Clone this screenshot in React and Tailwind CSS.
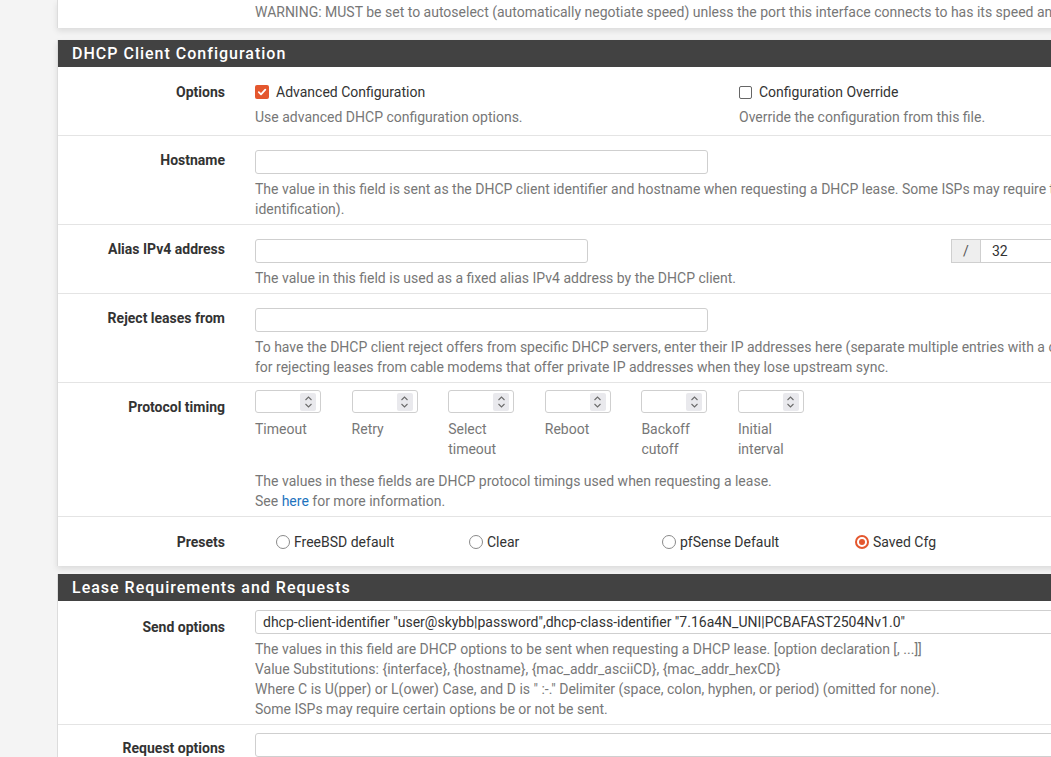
import React from "react";

function Label({ children, className }) {
  return (
    <div className={"w-[197px] shrink-0 pr-[30px] text-right font-bold text-[#333] " + className}>
      {children}
    </div>
  );
}

function Help({ children, className = "" }) {
  return <div className={"text-[#777] " + className}>{children}</div>;
}

function TextInput({ className = "", value = "" }) {
  return (
    <div className={"h-[24px] rounded-[3px] border border-[#cfcfcf] bg-white px-[7px] leading-[22px] text-[#333] whitespace-nowrap overflow-hidden " + className}>
      {value}
    </div>
  );
}

function Check({ checked }) {
  if (checked) {
    return (
      <span className="inline-flex h-[14px] w-[14px] items-center justify-center rounded-[2px] bg-[#e4572e]">
        <svg width="10" height="10" viewBox="0 0 10 10">
          <path d="M1.8 5.2 L4 7.3 L8.3 2.6" fill="none" stroke="#fff" strokeWidth="1.8" strokeLinecap="round" strokeLinejoin="round" />
        </svg>
      </span>
    );
  }
  return <span className="inline-block h-[13px] w-[13px] rounded-[2px] border-[1.5px] border-[#666] bg-white" />;
}

function Radio({ checked }) {
  if (checked) {
    return (
      <span className="inline-flex h-[14px] w-[14px] items-center justify-center rounded-full border-[2px] border-[#e4572e] bg-white">
        <span className="h-[6px] w-[6px] rounded-full bg-[#e4572e]" />
      </span>
    );
  }
  return <span className="inline-block h-[14px] w-[14px] rounded-full border-[1.5px] border-[#8a8a8a] bg-white" />;
}

function Spinner() {
  return (
    <div className="flex h-[23px] w-[66px] items-center justify-end rounded-[3px] border border-[#cfcfcf] bg-white pr-[4px]">
      <div className="flex h-[18px] w-[16px] flex-col items-center justify-center rounded-[2px] bg-[#e9e9ed]">
        <svg width="9" height="14" viewBox="0 0 9 14">
          <path d="M1.5 5 L4.5 2 L7.5 5" fill="none" stroke="#6b6b6b" strokeWidth="1.1" />
          <path d="M1.5 9 L4.5 12 L7.5 9" fill="none" stroke="#6b6b6b" strokeWidth="1.1" />
        </svg>
      </div>
    </div>
  );
}

function Header({ children }) {
  return (
    <div className="h-[27px] bg-[#424242] pl-[14px] text-[16px] font-medium leading-[27px] tracking-[1px] text-white">
      {children}
    </div>
  );
}

export default function App() {
  const timings = [
    "Timeout",
    "Retry",
    "Select timeout",
    "Reboot",
    "Backoff cutoff",
    "Initial interval",
  ];
  const presets = [
    ["FreeBSD default", false],
    ["Clear", false],
    ["pfSense Default", false],
    ["Saved Cfg", true],
  ];
  return (
    <div className="h-[757px] w-[1051px] overflow-hidden bg-[#f4f4f4] font-[Roboto,sans-serif] text-[14px] leading-[20px] text-[#333]">
      <div className="ml-[57px] flex w-[1200px] flex-col">
        {/* previous panel tail */}
        <div className="h-[28px] border-l border-[#dcdcdc] bg-white pl-[197px] pt-[2px] shadow-[0_3px_6px_rgba(0,0,0,0.10)]">
          <div className="whitespace-nowrap text-[#777]">
            WARNING: MUST be set to autoselect (automatically negotiate speed) unless the port this interface connects to has its speed and duplex forced.
          </div>
        </div>

        {/* DHCP Client Configuration */}
        <div className="mt-[12px] flex flex-col border-l border-[#dcdcdc] bg-white shadow-[0_3px_6px_rgba(0,0,0,0.10)]">
          <Header>DHCP Client Configuration</Header>

          {/* Options */}
          <div className="flex">
            <Label className="pt-[15px]">Options</Label>
            <div className="flex pt-[15px] pb-[8px]">
              <div className="w-[484px]">
                <div className="flex h-[20px] items-center">
                  <Check checked />
                  <span className="ml-[7px]">Advanced Configuration</span>
                </div>
                <Help className="mt-[5px]">Use advanced DHCP configuration options.</Help>
              </div>
              <div className="w-[400px]">
                <div className="flex h-[20px] items-center">
                  <Check checked={false} />
                  <span className="ml-[7px]">Configuration Override</span>
                </div>
                <Help className="mt-[5px]">Override the configuration from this file.</Help>
              </div>
            </div>
          </div>

          {/* Hostname */}
          <div className="flex border-t border-[#e4e4e4]">
            <Label className="pt-[14px]">Hostname</Label>
            <div className="w-[955px] pt-[14px] pb-[5px]">
              <TextInput className="w-[453px]" />
              <Help className="mt-[5px]">
                The value in this field is sent as the DHCP client identifier and hostname when requesting a DHCP lease. Some ISPs may require this (for client identification).
              </Help>
            </div>
          </div>

          {/* Alias IPv4 */}
          <div className="flex border-t border-[#e4e4e4]">
            <Label className="pt-[14px]">Alias IPv4 address</Label>
            <div className="w-[955px] pt-[14px] pb-[5px]">
              <div className="flex">
                <TextInput className="w-[333px]" />
                <div className="ml-[363px] flex">
                  <div className="h-[24px] w-[30px] border border-[#cfcfcf] bg-[#eeeeee] text-center leading-[22px] text-[#555]">/</div>
                  <div className="h-[24px] w-[160px] border border-l-0 border-[#cfcfcf] bg-white pl-[11px] leading-[22px] text-[#333]">32</div>
                </div>
              </div>
              <Help className="mt-[5px]">The value in this field is used as a fixed alias IPv4 address by the DHCP client.</Help>
            </div>
          </div>

          {/* Reject leases */}
          <div className="flex border-t border-[#e4e4e4]">
            <Label className="pt-[14px]">Reject leases from</Label>
            <div className="w-[955px] pt-[14px] pb-[5px]">
              <TextInput className="w-[453px]" />
              <Help className="mt-[5px]">
                To have the DHCP client reject offers from specific DHCP servers, enter their IP addresses here (separate multiple entries with a comma). This is useful for rejecting leases from cable modems that offer private IP addresses when they lose upstream sync.
              </Help>
            </div>
          </div>

          {/* Protocol timing */}
          <div className="flex border-t border-[#e4e4e4]">
            <Label className="pt-[14px]">Protocol timing</Label>
            <div className="w-[955px] pt-[7px] pb-[5px]">
              <div className="flex">
                {timings.map((t) => (
                  <div key={t} className="w-[96.6px] shrink-0">
                    <Spinner />
                    <div className="mt-[6px] w-[70px] text-[#777]">{t}</div>
                  </div>
                ))}
              </div>
              <Help className="mt-[12px]">
                The values in these fields are DHCP protocol timings used when requesting a lease.
                <br />
                See <span className="text-[#1e73be]">here</span> for more information.
              </Help>
            </div>
          </div>

          {/* Presets */}
          <div className="flex border-t border-[#e4e4e4]">
            <Label className="pt-[15px]">Presets</Label>
            <div className="flex pt-[15px] pb-[14px]">
              {presets.map(([t, c]) => (
                <div key={t} className="flex h-[20px] w-[193px] items-center pl-[21px]">
                  <Radio checked={c} />
                  <span className="ml-[4px]">{t}</span>
                </div>
              ))}
            </div>
          </div>
        </div>

        {/* Lease Requirements and Requests */}
        <div className="mt-[8px] flex flex-col border-l border-[#dcdcdc] bg-white">
          <Header>Lease Requirements and Requests</Header>

          <div className="flex">
            <Label className="pt-[16px]">Send options</Label>
            <div className="w-[955px] pt-[9px] pb-[5px]">
              <TextInput
                className="w-full"
                value={'dhcp-client-identifier "user@skybb|password",dhcp-class-identifier "7.16a4N_UNI|PCBAFAST2504Nv1.0"'}
              />
              <Help className="mt-[5px]">
                The values in this field are DHCP options to be sent when requesting a DHCP lease. [option declaration [, ...]]
                <br />
                Value Substitutions: {"{interface}"}, {"{hostname}"}, {"{mac_addr_asciiCD}"}, {"{mac_addr_hexCD}"}
                <br />
                Where C is U(pper) or L(ower) Case, and D is " :-." Delimiter (space, colon, hyphen, or period) (omitted for none).
                <br />
                Some ISPs may require certain options be or not be sent.
              </Help>
            </div>
          </div>

          <div className="flex border-t border-[#e4e4e4]">
            <Label className="pt-[13px]">Request options</Label>
            <div className="w-[955px] pt-[8px] pb-[10px]">
              <TextInput className="w-full" />
            </div>
          </div>
        </div>
      </div>
    </div>
  );
}
